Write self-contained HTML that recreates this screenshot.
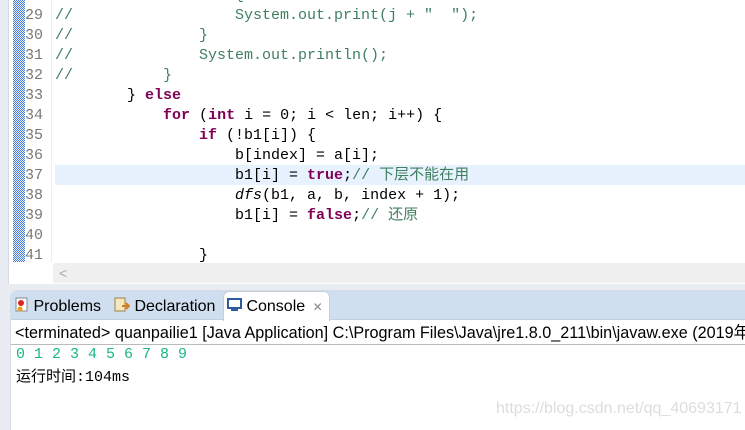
<!DOCTYPE html>
<html><head><meta charset="utf-8"><style>
*{margin:0;padding:0;box-sizing:border-box}
body{width:745px;height:430px;overflow:hidden;background:#e9edf3;position:relative;font-family:"Liberation Sans","Noto Sans CJK SC",sans-serif}
#ed{position:absolute;left:8px;top:0;width:737px;height:284px;background:#fff;border-left:1px solid #d5dbe3}
#chk{position:absolute;left:13px;top:0;width:12px;height:262px;background-image:repeating-conic-gradient(#4a7fd8 0 25%,#e6eefb 0 50%);background-size:2px 2px}
.ln{position:absolute;left:25px;width:22px;text-align:left;color:#787878;font:15px "Liberation Mono",monospace;height:20px;line-height:20px}
.cl{position:absolute;left:55px;white-space:pre;font:15px "Liberation Mono","Noto Sans CJK SC",monospace;height:20px;line-height:20px;color:#000}
.c{color:#3f7f5f}.k{color:#7f0055;font-weight:bold}.i{font-style:italic}
#hl{position:absolute;left:55px;top:165px;width:690px;height:20px;background:#e8f2fe}
#sep{position:absolute;left:51px;top:0;width:1px;height:262px;background:#eef0f3}
#hs{position:absolute;left:53px;top:263px;width:692px;height:20px;background:#f0f0f0;color:#aaa;font-size:14px;padding-left:6px;line-height:20px}
#con{position:absolute;left:10px;top:290px;width:735px;height:140px;background:#fff;border-radius:5px 0 0 0;border:1px solid #d5dbe3;border-right:0;border-bottom:0}
#tabs{position:absolute;left:0;top:0;width:100%;height:29px;background:#d0dff0;border-radius:5px 0 0 0;border-bottom:1px solid #c5cfdb}
.tab{position:absolute;top:6px;font-size:16px;color:#000}
#act{position:absolute;left:212px;top:0;width:107px;height:30px;background:#fff;border-radius:6px 6px 0 0;border:1px solid #c5cfdb;border-bottom:0}
#hdr{position:absolute;left:0;top:29px;width:100%;height:25px;border-bottom:1px solid #bbb;font-size:16.2px;line-height:26px;padding-left:4px;white-space:nowrap;overflow:hidden}
.o{position:absolute;left:5px;font:15px "Liberation Mono","Noto Sans CJK SC",monospace;white-space:pre}
#wm{position:absolute;left:496px;top:400px;font-size:16px;color:#ddd}
</style></head><body>
<div id="ed"></div>
<div id="chk"></div>
<div id="sep"></div>
<div id="hl"></div>
<div class="ln" style="top:-14px">28</div><div class="cl c" style="top:-14px">//                  {</div>
<div class="ln" style="top:6px">29</div><div class="cl c" style="top:6px">//                  System.out.print(j + "  ");</div>
<div class="ln" style="top:26px">30</div><div class="cl c" style="top:26px">//              }</div>
<div class="ln" style="top:46px">31</div><div class="cl c" style="top:46px">//              System.out.println();</div>
<div class="ln" style="top:66px">32</div><div class="cl c" style="top:66px">//          }</div>
<div class="ln" style="top:86px">33</div><div class="cl" style="top:86px">        } <span class="k">else</span></div>
<div class="ln" style="top:106px">34</div><div class="cl" style="top:106px">            <span class="k">for</span> (<span class="k">int</span> i = 0; i &lt; len; i++) {</div>
<div class="ln" style="top:126px">35</div><div class="cl" style="top:126px">                <span class="k">if</span> (!b1[i]) {</div>
<div class="ln" style="top:146px">36</div><div class="cl" style="top:146px">                    b[index] = a[i];</div>
<div class="ln" style="top:166px">37</div><div class="cl" style="top:166px">                    b1[i] = <span class="k">true</span>;<span class="c">// 下层不能在用</span></div>
<div class="ln" style="top:186px">38</div><div class="cl" style="top:186px">                    <span class="i">dfs</span>(b1, a, b, index + 1);</div>
<div class="ln" style="top:206px">39</div><div class="cl" style="top:206px">                    b1[i] = <span class="k">false</span>;<span class="c">// 还原</span></div>
<div class="ln" style="top:226px">40</div>
<div class="ln" style="top:246px">41</div><div class="cl" style="top:246px">                }</div>
<div id="hs">&lt;</div>
<div id="con">
 <div id="tabs">
  <div class="tab" style="left:4px"><svg width="14" height="16" style="vertical-align:-2px"><rect x="1" y="1" width="11" height="13" fill="#fff" stroke="#888"/><circle cx="6" cy="6" r="3" fill="#d22"/><circle cx="5" cy="12" r="2.5" fill="#e8a020"/></svg> Problems</div>
  <div class="tab" style="left:103px"><svg width="16" height="16" style="vertical-align:-2px"><rect x="1" y="1" width="10" height="13" fill="#f4e8c0" stroke="#a08040"/><path d="M8 9h7M12 6l3 3-3 3" stroke="#d08020" stroke-width="2" fill="none"/></svg> Declaration</div>
  <div id="act"></div>
  <div class="tab" style="left:216px"><svg width="15" height="16" style="vertical-align:-2px"><rect x="1" y="2" width="13" height="9" fill="#fff" stroke="#2d5aa0" stroke-width="2"/><rect x="4" y="12" width="7" height="2" fill="#2d5aa0"/></svg> Console <span style="color:#888;font-size:12px;margin-left:3px">✕</span></div>
 </div>
 <div id="hdr">&lt;terminated&gt; quanpailie1 [Java Application] C:\Program Files\Java\jre1.8.0_211\bin\javaw.exe (2019年</div>
 <div class="o" style="top:55px;color:#19b58a">0 1 2 3 4 5 6 7 8 9</div>
 <div class="o" style="top:74px">运行时间:104ms</div>
</div>
<div id="wm">https://blog.csdn.net/qq_40693171</div>
</body></html>
